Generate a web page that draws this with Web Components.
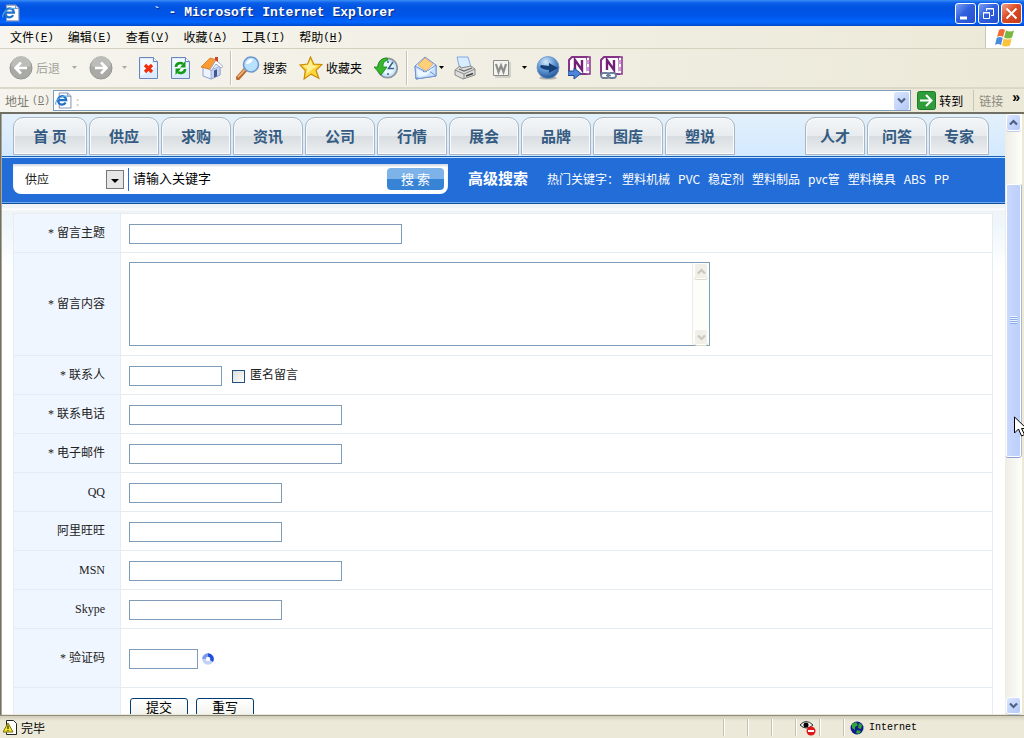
<!DOCTYPE html>
<html lang="zh-CN">
<head>
<meta charset="utf-8">
<title>Microsoft Internet Explorer</title>
<style>
html,body{margin:0;height:100%}
body{font:12px/16px "Noto Sans CJK SC",sans-serif;color:#000;background:#ece9d8;overflow:hidden}
browser-window{height:100vh}
</style>
</head>
<body>
<browser-window></browser-window>
<script>
const define = (name, html, setup) => {
  const t = document.createElement('template');
  t.innerHTML = '<style>*{box-sizing:border-box}a{color:inherit;text-decoration:none}button,input,select,textarea{font:inherit;color:inherit;margin:0;padding:0;border:0;background:none;outline:0}svg{display:block;flex:none}</style>' + html;
  customElements.define(name, class extends HTMLElement {
    constructor(){ super(); this.attachShadow({mode:'open'}).append(t.content.cloneNode(true)); }
    connectedCallback(){ if (setup && !this.ready) { this.ready = true; setup(this, this.shadowRoot); } }
  });
};

const icons = {
  page:`<path d="M4 1h8l3 3v11H4z" fill="#fff" stroke="#8a99b8"/><path d="M12 1v3h3" fill="#dde6f5" stroke="#8a99b8"/><path d="M10 10a4 4 0 1 1 .6-2.400H3.500" fill="none" stroke="#1f70c8" stroke-width="2"/><path d="M1 12C-1 8 6 3 12 4" fill="none" stroke="#58a7e8"/>`,
  back:`<circle cx="12" cy="12" r="11" fill="#a9a9a6" stroke="#969693"/><path d="M2 10a10 10 0 0 1 20 0q-10 4-20 0z" fill="#bcbcb9"/><path d="M18 12H7M12 6.500L6.500 12l5.500 5.500" stroke="#fff" stroke-width="2.600" fill="none"/>`,
  forward:`<circle cx="12" cy="12" r="11" fill="#a9a9a6" stroke="#969693"/><path d="M2 10a10 10 0 0 1 20 0q-10 4-20 0z" fill="#bcbcb9"/><path d="M6 12h11M12 6.500l5.500 5.500-5.500 5.500" stroke="#fff" stroke-width="2.600" fill="none"/>`,
  stop:`<path d="M3.500 1.500h14l4 4v17h-18z" fill="#dcebff" stroke="#6a86bd"/><path d="M5 3h11v4h4v4L5 20z" fill="#f3f9ff"/><path d="M17.500 1.500v4h4" fill="#fff" stroke="#6a86bd"/><path d="M9 9l7 7M16 9l-7 7" stroke="#f0300c" stroke-width="3.200"/>`,
  refresh:`<path d="M3.500 1.500h14l4 4v17h-18z" fill="#dcebff" stroke="#6a86bd"/><path d="M5 3h11v4h4v4L5 20z" fill="#f3f9ff"/><path d="M17.500 1.500v4h4" fill="#fff" stroke="#6a86bd"/><path d="M8 11c0-4 5-5 7-3M17 13c0 4-5 5-7 3" stroke="#129a18" stroke-width="2.600" fill="none"/><path d="M17.500 5v6.500H12zM7.500 19v-6.500H13z" fill="#129a18"/>`,
  home:`<path d="M3 12l8-8 9 7v8l-9 4-8-3z" fill="#eef4ff" stroke="#8da2ce"/><path d="M11 14l9-4v9l-9 4z" fill="#c3d5f3" stroke="#8da2ce" stroke-width=".7"/><path d="M14 14.500l3-1.300v7l-3 1.300z" fill="#43568e"/><path d="M1 11L10 2l7 2-7 9.500z" fill="#f79b32" stroke="#d87416" stroke-width=".8"/><path d="M10 13.500L16 4l7 6.500-2 1.500-5-4-5 7z" fill="#fff" stroke="#8b98bd" stroke-width=".8"/><path d="M15 1h3v5l-3-2z" fill="#c74432"/>`,
  search:`<path d="M2 22l8-9" stroke="#b96a30" stroke-width="4.400" stroke-linecap="round"/><path d="M2.500 20.500l7-7.500" stroke="#f3b47b" stroke-width="1.800" stroke-linecap="round"/><circle cx="15" cy="8.500" r="7.500" fill="#b8e0ff" stroke="#6e97cd" stroke-width="1.600"/><path d="M10 8a5 5 0 0 1 7-4.500Q15 8 10 8z" fill="#fff"/>`,
  star:`<path d="M11.500 1l3.300 7.200 8.200.3-6 5.800 2.800 8-7.700-4.200-7 4.900 1.200-8.500L1 9l7.700-1z" fill="#ffd53c" stroke="#c88c08" stroke-width="1.200"/><path d="M11.500 4l2 5.500 5 .5-5 3-6 5 1-5.500L4 10l5-1z" fill="#fff197"/>`,
  history:`<circle cx="13.500" cy="12" r="9.700" fill="#c9e5fa" stroke="#9097a3" stroke-width="1.800"/><circle cx="14" cy="12" r="6.500" fill="#e7f6ff"/><path d="M19 6l-4.500 6.500H20M14 17v2M14 5v2" stroke="#3b6287" stroke-width="1.500" fill="none"/><path d="M13 2C6 2 4 7 4 11H0l7 8 6-8H9c0-4 1-6 5-7z" fill="#39b72b" stroke="#16841a" stroke-width=".8"/>`,
  mail:`<path d="M1 10L11 1l11 8v11L2 23z" fill="#dceaff" stroke="#7193cf"/><path d="M4 9l7-7 8 6-7 7z" fill="#ffd07a" stroke="#e1a052" stroke-width=".7"/><path d="M1 10l11 6L22 9v11L2 23z" fill="#c9e3ff" stroke="#6e91cb"/><path d="M2 23l8-8M22 20l-8-6" stroke="#6e91cb"/><path d="M3 13l8 4 9-6-7 8-9 2z" fill="#eef8ff"/>`,
  print:`<path d="M4 1h11l3 10-11 3z" fill="#d8ebff" stroke="#82a7e0"/><path d="M2 14l5-4 1 2 10-2 4 3v6l-12 4-8-4z" fill="#ddd" stroke="#8a8a88"/><path d="M2 14l9 4 11-5M11 18v5" stroke="#8a8a88" fill="none"/><path d="M13 20l7-2.500" stroke="#444" stroke-width="1.600"/><path d="M6 13l5 2 8-3" stroke="#666" stroke-width="1.200" fill="none"/>`,
  word:`<path d="M4.500 4.500h15v15h-15z" fill="#f4f4f0" stroke="#8a8a88"/><path d="M6 21h15V6" stroke="#b4b4b0" fill="none"/><path d="M7 8l2.500 8L12 9.500l2.500 6.500L17 8" stroke="#8d8d8a" stroke-width="2.200" fill="none"/>`,
  globe:`<defs><radialGradient id="g" cx=".4" cy=".25" r=".8"><stop offset="0" stop-color="#d4e9fb"/><stop offset=".5" stop-color="#5e97d3"/><stop offset="1" stop-color="#1d4c8d"/></radialGradient></defs><ellipse cx="12" cy="22" rx="9" ry="1.600" fill="#b5b4aa"/><circle cx="12" cy="11.500" r="11" fill="url(#g)" stroke="#6f97c8" stroke-width=".8"/><path d="M5 9l8 1V7l9 5-9 5v-3q-6 0-9-3z" fill="#153f77"/>`,
  note:`<path d="M4 1h15v17H1V4z" fill="#fff" stroke="#84358a" stroke-width="2"/><path d="M19 1h3v17h-4" fill="#fff" stroke="#84358a" stroke-width="1.500"/><path d="M18 4h3v4h-3zM18 11h3v4h-3z" fill="#ce9ad2"/><path d="M7 14V4l7 10V4" stroke="#731f75" stroke-width="2.400" fill="none"/><path d="M0 15h6v-3l7 5.500L6 23v-3.500H0z" fill="#4c86dc" stroke="#244b93"/>`,
  link:`<path d="M4 1h15v17H1V4z" fill="#fff" stroke="#84358a" stroke-width="2"/><path d="M19 1h3v17h-4" fill="#fff" stroke="#84358a" stroke-width="1.500"/><path d="M18 4h3v4h-3zM18 11h3v4h-3z" fill="#ce9ad2"/><path d="M7 14V4l7 10V4" stroke="#731f75" stroke-width="2.400" fill="none"/><rect x="1" y="17" width="8" height="5" rx="2.500" fill="#fff" stroke="#6b7f9b" stroke-width="1.800"/><rect x="8" y="17" width="8" height="5" rx="2.500" fill="#fff" stroke="#6b7f9b" stroke-width="1.800"/><path d="M6 19.500h5" stroke="#6b7f9b" stroke-width="1.500"/>`
};
const icon = (n, s = 24) => `<svg width="${s}" height="${s}" viewBox="0 0 ${n === 'page' ? '16 16' : '24 24'}" aria-hidden="true">${icons[n]}</svg>`;
const chevron = (d, c) => `<svg width="9" height="7" viewBox="0 0 9 7"><path d="${d === 'up' ? 'M1 5.500L4.500 2 8 5.500' : 'M1 1.500L4.500 5 8 1.500'}" fill="none" stroke="${c}" stroke-width="2.200"/></svg>`;

define('title-bar', `<style>
:host{display:flex;align-items:center;height:26px;padding:0 2px;background:linear-gradient(#3a8df5 0,#0a5ee8 3px,#0053e0 8px,#0055ea 16px,#0066ff 22px,#0048c8 26px)}
h1{flex:1;margin:0 0 0 133px;font:bold 13px/20px "Liberation Mono",monospace;color:#fff;text-shadow:1px 1px #0a2c80;white-space:pre}
div{display:flex;gap:2px}
button{width:21px;height:21px;border:1px solid #fff;border-radius:3px;background:linear-gradient(135deg,#7c9ff5,#3060dd 45%,#2450cf)}
button.close{background:linear-gradient(135deg,#f0a58a,#dc4b25 45%,#c43c1a)}
</style>${icon('page',18)}<h1>\` - Microsoft Internet Explorer</h1>
<div><button aria-label="最小化"><svg width="19" height="19"><path d="M4 14h7" stroke="#fff" stroke-width="3"/></svg></button>
<button aria-label="还原"><svg width="19" height="19" fill="none" stroke="#fff"><path d="M7.500 7V4.500h7v7H12M7 5h8"/><path d="M4.500 8.500h6v6h-6zM4 9h7"/></svg></button>
<button class="close" aria-label="关闭"><svg width="19" height="19"><path d="M4.500 4.500l10 10M14.500 4.500l-10 10" stroke="#fff" stroke-width="2"/></svg></button></div>`);

define('menu-bar', `<style>
:host{display:flex;height:23px;border-bottom:1px solid #d5d1bf;background:linear-gradient(90deg,#f6f5ef,#ece9d8)}
nav{display:flex;flex:1;gap:14px;padding-left:10px}
button{display:flex;align-items:center;font-size:12px}
span{font:11px/16px "Liberation Mono",monospace}
.flag{display:grid;place-items:center;width:39px;background:#fff;border-left:1px solid #cbc7b4}
</style><nav></nav><div class="flag"><svg width="20" height="19" viewBox="0 0 20 19"><path d="M4 2q3-2 6 0L8 9Q5 7 2 9z" fill="#f06a35"/><path d="M11 2.500q4 2 8 0L17 9.500q-4 2-8 0z" fill="#79b840"/><path d="M1.700 10q3-2 6 0L6 17q-3-2-6 0z" fill="#4a8bdd"/><path d="M8.700 10.500q4 2 8 0L15 17.500q-4 2-8 0z" fill="#f9c43a"/></svg></div>`,
(h, r) => { r.querySelector('nav').innerHTML = ['文件F','编辑E','查看V','收藏A','工具T','帮助H'].map(s => `<button>${s.slice(0,2)}<span>(<u>${s[2]}</u>)</span></button>`).join(''); });

const arrow = c => `<svg class="arrow" width="7" height="4" viewBox="0 0 7 4"><path d="M1 0h5L3.500 3z" fill="${c}"/></svg>`;
define('tool-bar', `<style>
:host{display:flex;align-items:center;height:40px;border-bottom:2px solid #dcd8c8;background:linear-gradient(90deg,#f5f4ee,#ece9d8)}
div{display:flex;align-items:center;height:34px}
.a{gap:8px;padding:0 6px 0 9px}.b{gap:12px;padding:0 7px 0 5px}.c{gap:8px;padding-left:7px}
div+div{border-left:1px solid #c5c2b0;box-shadow:inset 1px 0 #fff;margin-right:1px}
button{display:flex;align-items:center;gap:3px}
.tight{gap:0}.off{color:#a3a29a}.wide{padding:0 3px}.gap{margin-left:4px}
</style><div class="a"><button class="off">${icon('back')}后退</button><button class="wide" aria-label="后退列表">${arrow('#aaa')}</button><button aria-label="前进">${icon('forward')}</button><button aria-label="前进列表">${arrow('#aaa')}</button><button aria-label="停止">${icon('stop')}</button><button aria-label="刷新">${icon('refresh')}</button><button aria-label="主页">${icon('home')}</button></div>
<div class="b"><button>${icon('search')}搜索</button><button>${icon('star')}收藏夹</button><button aria-label="历史">${icon('history')}</button></div>
<div class="c"><button class="tight" aria-label="邮件">${icon('mail')}${arrow('#000')}</button><button aria-label="打印">${icon('print')}</button><button class="gap" aria-label="编辑">${icon('word')}</button><button aria-label="编辑列表">${arrow('#000')}</button><button aria-label="信使">${icon('globe')}</button><button aria-label="笔记">${icon('note')}</button><button aria-label="链接笔记">${icon('link')}</button></div>`);

define('address-bar', `<style>
:host{display:flex;align-items:center;height:23px;padding:0 4px 0 5px;background:linear-gradient(90deg,#f5f4ee,#ece9d8 30%)}
label{display:flex;gap:3px;width:48px;color:#7d7b72;white-space:nowrap}label span{font:10px/16px "Liberation Mono",monospace}
.field{flex:1;display:flex;align-items:center;height:21px;border:1px solid #7f9db9;background:#fff;padding:0 1px}
input{flex:1;min-width:0;margin-left:4px;color:#bbb;height:18px}
.drop{display:grid;place-items:center;width:15px;height:18px;border-radius:2px;background:linear-gradient(135deg,#dbe6ff,#b3c8f7)}
.go{display:flex;align-items:center;gap:3px;margin:0 10px 0 6px}
.links{display:flex;align-items:center;gap:9px;height:21px;padding-left:5px;border-left:1px solid #c9c5b2;color:#8b897e}
.links b{font:bold 14px/14px "Liberation Sans",sans-serif;color:#000;padding-bottom:8px}
</style><label for="url">地址<span>(<u>D</u>)</span></label><div class="field">${icon('page',17)}<input id="url" value=":"><button class="drop" aria-label="地址列表">${chevron('down','#4d6185')}</button></div>
<button class="go"><svg width="19" height="19"><rect x=".5" y=".5" width="18" height="18" rx="2" fill="#2f9b3a" stroke="#1d7a2a"/><path d="M3 9.500h11M9 4l5.500 5.500L9 15" stroke="#fff" stroke-width="2" fill="none"/></svg>转到</button>
<div class="links">链接<b>»</b></div>`);

define('site-nav', `<style>
:host{display:flex;justify-content:space-between;height:42px;padding:3px 16px 0 11px;background:linear-gradient(#e3f0fa,#d3e9ff)}
nav{display:flex;gap:2px}
a{display:grid;place-items:center;width:70px;height:38px;border:1px solid #a9b5bf;border-radius:10px 10px 0 0;background:linear-gradient(#f3f6f8,#e8ecef 49%,#d8dde1 51%,#eceff1);box-shadow:inset 0 0 0 1px #f8fafb;font-weight:bold;font-size:15px;color:#345b82}
nav:first-of-type a:first-child{width:74px}
nav.side a,nav.side a:first-child{width:60px}
</style><nav><a href="#">首 页</a><a href="#">供应</a><a href="#">求购</a><a href="#">资讯</a><a href="#">公司</a><a href="#">行情</a><a href="#">展会</a><a href="#">品牌</a><a href="#">图库</a><a href="#">塑说</a></nav><nav class="side"><a href="#">人才</a><a href="#">问答</a><a href="#">专家</a></nav>`);

define('site-search', `<style>
:host{display:flex;align-items:center;height:48px;padding:0 11px;background:#226dd8;border-top:1px solid #1a5fb8;border-bottom:1px solid #1450a0;box-shadow:inset 0 1px #bfe4ff,inset 0 -1px #6fa8ee;color:#fff}
form{display:flex;align-items:center;width:435px;height:30px;margin-bottom:2px;background:#fff;border-radius:0 0 8px 8px;box-shadow:inset 0 2px 2px #d5dce6;color:#000;padding:0 4px 0 12px}
.pick{display:grid;grid-template-columns:81px 18px;align-items:center;width:99px}
select{grid-area:1/1/2/3;appearance:none;height:20px;line-height:20px;color:#222}
.pick svg{grid-area:1/2;pointer-events:none}
input{flex:1;min-width:0;height:23px;margin:0 4px;padding:0 0 4px 4px;border-left:1px solid #226dd8;font-size:13px}
form button{width:57px;height:22px;border-radius:4px;background:linear-gradient(#7db3e8 48%,#3784d6 50%);font-size:13px;line-height:20px;color:#fff}
.adv{margin:0 19px 4px 20px;font-size:15px;font-weight:bold}
.hot{display:flex;gap:8px;padding-bottom:2px;white-space:nowrap}
.hot span{width:67px}
</style><form><div class="pick"><select aria-label="类别"><option>供应</option></select><svg width="18" height="19"><rect x=".5" y=".5" width="17" height="18" fill="#e6e6e6" stroke="#777"/><path d="M5 9h8l-4 4z"/></svg></div><input aria-label="关键字" value="请输入关键字"><button type="button">搜 索</button></form>
<a class="adv" href="#">高级搜索</a><div class="hot"><span>热门关键字：</span><a href="#">塑料机械</a><a href="#">PVC</a><a href="#">稳定剂</a><a href="#">塑料制品</a><a href="#">pvc管</a><a href="#">塑料模具</a><a href="#">ABS</a><a href="#">PP</a></div>`);

define('form-row', `<style>
:host{display:flex;min-height:39px;border-bottom:1px solid #e5edf2;color:#222}
.name{display:flex;align-items:center;justify-content:flex-end;width:107px;padding-right:15px;border-right:1px solid #e5edf2;background:#f0f6ff;font-family:"Liberation Serif","Noto Sans CJK SC",serif;white-space:pre}
.body{display:flex;flex:1;align-items:center;padding:2px 8px 0}
:host([tall]){min-height:59px}:host([area]){min-height:103px}
:host([area]) .body{padding-top:0}
input{height:20px;border:1px solid #7f9db9;background:#fff;padding:0 3px}
.area{display:flex;width:581px;height:84px;border:1px solid #7f9db9}
textarea{flex:1;resize:none;padding:2px}
</style><label class="name" for="c"></label><div class="body"><slot></slot></div>`,
(h, r) => {
  r.querySelector('.name').textContent = h.getAttribute('label');
  const w = h.getAttribute('width');
  const html = h.hasAttribute('area') ? '<div class="area"><textarea id="c"></textarea><scroll-bar idle></scroll-bar></div>' : w ? `<input id="c" style="width:${w}px">` : '';
  r.querySelector('.body').insertAdjacentHTML('afterbegin', html);
});

define('check-option', `<style>
:host{display:flex;margin-left:10px}
label{display:flex;align-items:center;gap:5px;color:#222}
input{appearance:none;width:13px;height:13px;border:1px solid #1c5180;background:linear-gradient(135deg,#dcdcd7,#fff)}
span{padding-bottom:4px}
</style><label><input type="checkbox"><span><slot></slot></span></label>`);

define('form-actions', `<style>
:host{display:flex;gap:8px;padding:0 1px;align-self:flex-start;margin-top:8px}
button{width:58px;height:21px;border:1px solid #003c74;border-radius:3px;background:linear-gradient(#fff,#f0f0ea);font-size:13px;line-height:15px;padding-bottom:4px;color:#000}
button:first-child{box-shadow:inset 0 0 0 2px #b4cdf5}
</style><button>提交</button><button>重写</button>`);

define('loading-ring', `<style>:host{display:block;margin-left:4px}</style><svg width="12" height="12" viewBox="0 0 12 12" fill="none" stroke-width="3.500"><circle cx="6" cy="6" r="4" stroke="#c3d1f8"/><path d="M2 6a4 4 0 0 1 4-4" stroke="#7c9bf0"/><path d="M6 2a4 4 0 0 1 3.500 6" stroke="#1f4fe0"/></svg>`);

define('message-form', `<style>
:host{display:block;padding:9px 12px 0 11px;background:linear-gradient(#f0f3f6 0,#f0f3f6 4px,#fff 5px,#f0f4f7 7px,#eff6fa 20px,#fff 66px)}
form{display:block;border:1px solid #e5edf2;border-bottom:0;background:#fff}
</style><form><form-row label="* 留言主题" width="273"></form-row><form-row area label="* 留言内容"></form-row><form-row label="* 联系人" width="93"><check-option>匿名留言</check-option></form-row><form-row label="* 联系电话" width="213"></form-row><form-row label="* 电子邮件" width="213"></form-row><form-row label="QQ" width="153"></form-row><form-row label="阿里旺旺" width="153"></form-row><form-row label="MSN" width="213"></form-row><form-row label="Skype" width="153"></form-row><form-row tall label="* 验证码" width="69"><loading-ring></loading-ring></form-row><form-row label=""><form-actions></form-actions></form-row></form>`);

define('scroll-bar', `<style>
:host{display:flex;flex-direction:column;width:17px;padding:0 1px;background:linear-gradient(90deg,#eeede5,#fefefb);--c:#4d6185;--f:linear-gradient(135deg,#dbe6ff,#b3c8f7)}
:host([idle]){--c:#c9c7bf;--f:#f0efe8;border-left:1px solid #eeede5;background:#fdfef9}
.end{display:grid;place-items:center;flex:none;height:17px;border:1px solid #fff;border-radius:3px;background:var(--f);box-shadow:0 1px #c0cbe0;width:100%}
:host([idle]) .end{box-shadow:0 1px #dcdac8;height:16px}
.end path{stroke:var(--c)}
.before{flex:53}.after{flex:241}
.thumb{flex:272;display:grid;place-items:center;border:1px solid #fff;border-radius:2px;background:linear-gradient(90deg,#c9d8fd,#bccffb);box-shadow:0 1px #8aa3d6,1px 0 #a9b9dc}
.grip{width:7px;height:8px;background:repeating-linear-gradient(#eef4fe 0 1px,#8caaf0 1px 2px)}
:host([idle]) .thumb{display:none}
</style><button class="end" type="button" aria-label="向上">${chevron('up','#4d6185')}</button><div class="before"></div><div class="thumb"><div class="grip"></div></div><div class="after"></div><button class="end" type="button" aria-label="向下">${chevron('down','#4d6185')}</button>`);

define('status-bar', `<style>
:host{display:flex;align-items:center;height:23px;border-top:1px solid #8f8d80;background:linear-gradient(#cfccba,#ece9d8 5px);padding-top:1px}
p{flex:1;display:flex;align-items:center;gap:4px;margin:0;padding-left:3px}
.pane{display:grid;place-items:center;width:24px;height:17px;border-left:1px solid #c6c3b2;box-shadow:inset 1px 0 #fff}
.zone{display:flex;gap:5px;width:181px;padding-left:6px;font:10px/16px "Liberation Mono",monospace}
</style><p><svg width="14" height="15"><path d="M3.500.5h7l3 3v11h-10z" fill="#fff" stroke="#222"/><path d="M5 3l5 9H0z" fill="#f5e625" stroke="#77700c"/><path d="M5 5.500v3.500M5 10v1" stroke="#000"/></svg>完毕</p>
<div class="pane"></div><div class="pane"></div><div class="pane"></div><div class="pane"><svg width="17" height="16"><path d="M1 5q6-7 13 0Q7 11 1 5z" fill="#eee" stroke="#333"/><circle cx="7" cy="5" r="2.500"/><circle cx="12" cy="11" r="4.500" fill="#e01717"/><path d="M9 11h6" stroke="#fff" stroke-width="2"/></svg></div><div class="pane"></div>
<div class="pane zone"><svg width="14" height="14"><circle cx="7" cy="7" r="6.500" fill="#101c8c"/><path d="M2 3l4-2 2 3-3 2v3l-3-2zM9 2l3 2-1 4-3-1zM7 9l4 1-2 3-3-1z" fill="#32a635"/></svg>Internet</div>`);

define('browser-window', `<style>
:host{display:flex;flex-direction:column;position:relative;overflow:hidden}
.view{flex:1;min-height:0;display:flex;border:solid #716f64;border-width:2px 0 0 1px;box-shadow:inset 1px 0 #aca899;padding:0 2px 1px 1px}
main{flex:1;min-width:0;overflow:hidden;background:#fff}
.cursor{position:absolute;right:-4px;top:416px}
</style><title-bar></title-bar><menu-bar></menu-bar><tool-bar></tool-bar><address-bar></address-bar>
<div class="view"><main><site-nav></site-nav><site-search></site-search><message-form></message-form></main><scroll-bar></scroll-bar></div><status-bar></status-bar>
<svg class="cursor" width="14" height="22" viewBox="0 0 14 22"><path d="M.5 1v16l4-4 3 7 3-1.500-3-6h5z" fill="#fff" stroke="#000"/></svg>`);
</script>
</body>
</html>
